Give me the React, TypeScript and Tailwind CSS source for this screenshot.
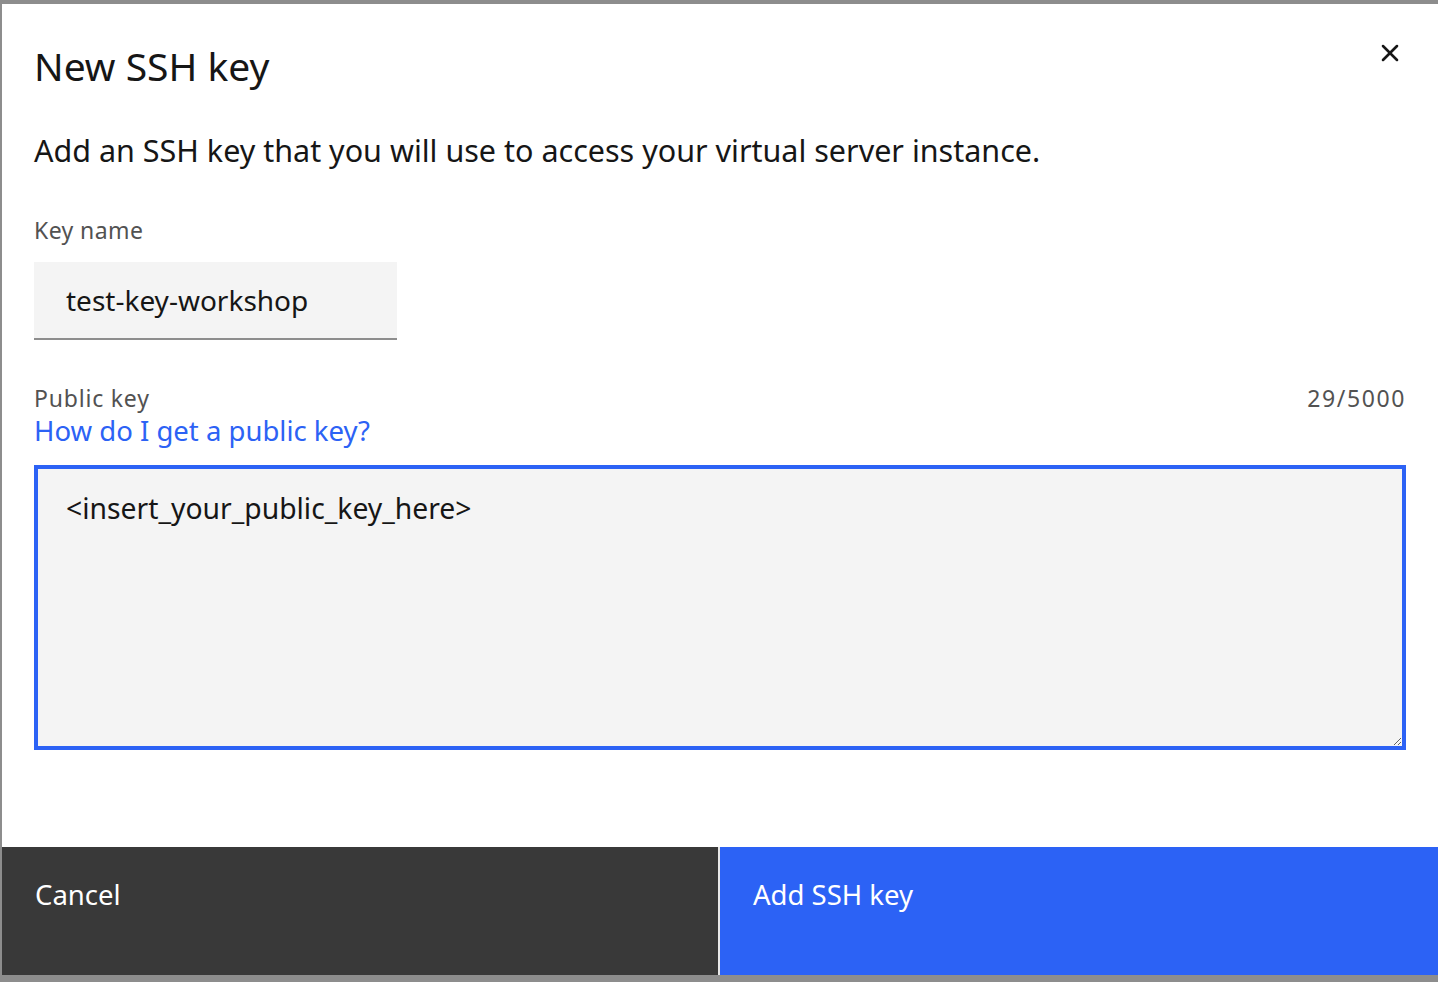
import { X } from 'lucide-react';

const font = { fontFamily: '"Noto Sans", "Liberation Sans", sans-serif' };

export default function App() {
  return (
    <div className="h-[982px] w-full bg-[#8d8d8d] pl-[2px] pt-[4px] pb-[7px]" style={font}>
      <div className="flex h-full flex-col bg-white">
        {/* Header */}
        <div className="flex items-start justify-between pl-[32px] pr-[24px] pt-[38px]">
          <h2 className="text-[39px] leading-[48px] text-[#161616]">New SSH key</h2>
          <button className="-mt-[13px] flex h-[48px] w-[48px] items-center justify-center text-[#161616]">
            <X size={28} strokeWidth={2.2} />
          </button>
        </div>

        <div className="flex flex-1 flex-col px-[32px]">
          <p className="mt-[40px] text-[30.5px] leading-[40px] text-[#161616]">
            Add an SSH key that you will use to access your virtual server instance.
          </p>

          {/* Key name */}
          <label className="mt-[46px] text-[23px] leading-[28px] tracking-[0.4px] text-[#525252]">Key name</label>
          <div className="mt-[18px] flex h-[78px] w-[363px] items-center border-b-2 border-[#8d8d8d] bg-[#f4f4f4] px-[32px]">
            <span className="text-[28px] leading-[36px] text-[#161616]">test-key-workshop</span>
          </div>

          {/* Public key */}
          <div className="mt-[44px] flex items-start justify-between">
            <div className="flex flex-col">
              <span className="text-[23px] leading-[28px] tracking-[0.8px] text-[#525252]">Public key</span>
              <a className="mt-[1px] text-[27.5px] leading-[36px] text-[#2c62f5]">How do I get a public key?</a>
            </div>
            <span className="text-[23px] leading-[28px] tracking-[1.6px] text-[#525252]">29/5000</span>
          </div>
          <textarea
            className="mt-[16px] h-[285px] w-full resize border-4 border-[#2c62f5] bg-[#f4f4f4] px-[28px] pt-[21px] text-[28.3px] leading-[36px] text-[#161616] outline-none"
            style={font}
            defaultValue="<insert_your_public_key_here>"
          />
        </div>

        {/* Footer */}
        <div className="grid h-[128px] grid-cols-[716px_1fr] gap-[2px] bg-[#e8e8e8]">
          <button className="flex items-start bg-[#393939] px-[33px] pt-[30px] text-left text-[27.5px] leading-[36px] text-white">
            Cancel
          </button>
          <button className="flex items-start bg-[#2c62f5] px-[33px] pt-[30px] text-left text-[27.5px] leading-[36px] text-white">
            Add SSH key
          </button>
        </div>
      </div>
    </div>
  );
}
